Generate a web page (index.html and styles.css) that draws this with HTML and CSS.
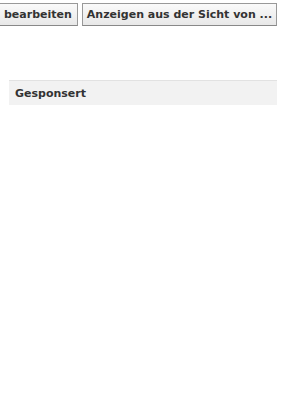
FILE: index.html
```html
<!DOCTYPE html>
<html lang="de">
<head>
    <meta charset="UTF-8" />
    <title>Werbeanzeigen</title>
    <link rel="stylesheet" href="styles.css">
</head>
<body>
    <div class="toolbar">
        <button class="btn btn-edit">bearbeiten</button>
        <button class="btn btn-view">Anzeigen aus der Sicht von ...</button>
    </div>
    <div class="sponsored">
        <div class="sponsored-head">Gesponsert</div>
    </div>
</body>
</html>
```

FILE: styles.css
```css
* {
    margin: 0;
    padding: 0;
    box-sizing: border-box;
}

body {
    font-family: "DejaVu Sans", "Liberation Sans", sans-serif;
    background: #fff;
    color: #333;
    width: 286px;
}

/* obere Buttons */
.toolbar {
    display: flex;
    gap: 4px;
    padding-top: 3px;
    margin-left: -2px;
}

.btn {
    height: 23px;
    padding: 0 5px;
    border: 1px solid #999;
    border-bottom-color: #888;
    background: linear-gradient(#fafafa, #e8e8e8);
    font-family: inherit;
    font-size: 11px;
    font-weight: bold;
    color: #333;
    white-space: nowrap;
}

.btn-view {
    padding: 0 4px;
}

/* Gesponsert */
.sponsored {
    margin: 54px 9px 0 9px;
}

.sponsored-head {
    height: 25px;
    padding: 0 6px;
    line-height: 25px;
    border-top: 1px solid #e2e2e2;
    background: #f2f2f2;
    font-size: 11px;
    font-weight: bold;
    color: #333;
}
```
